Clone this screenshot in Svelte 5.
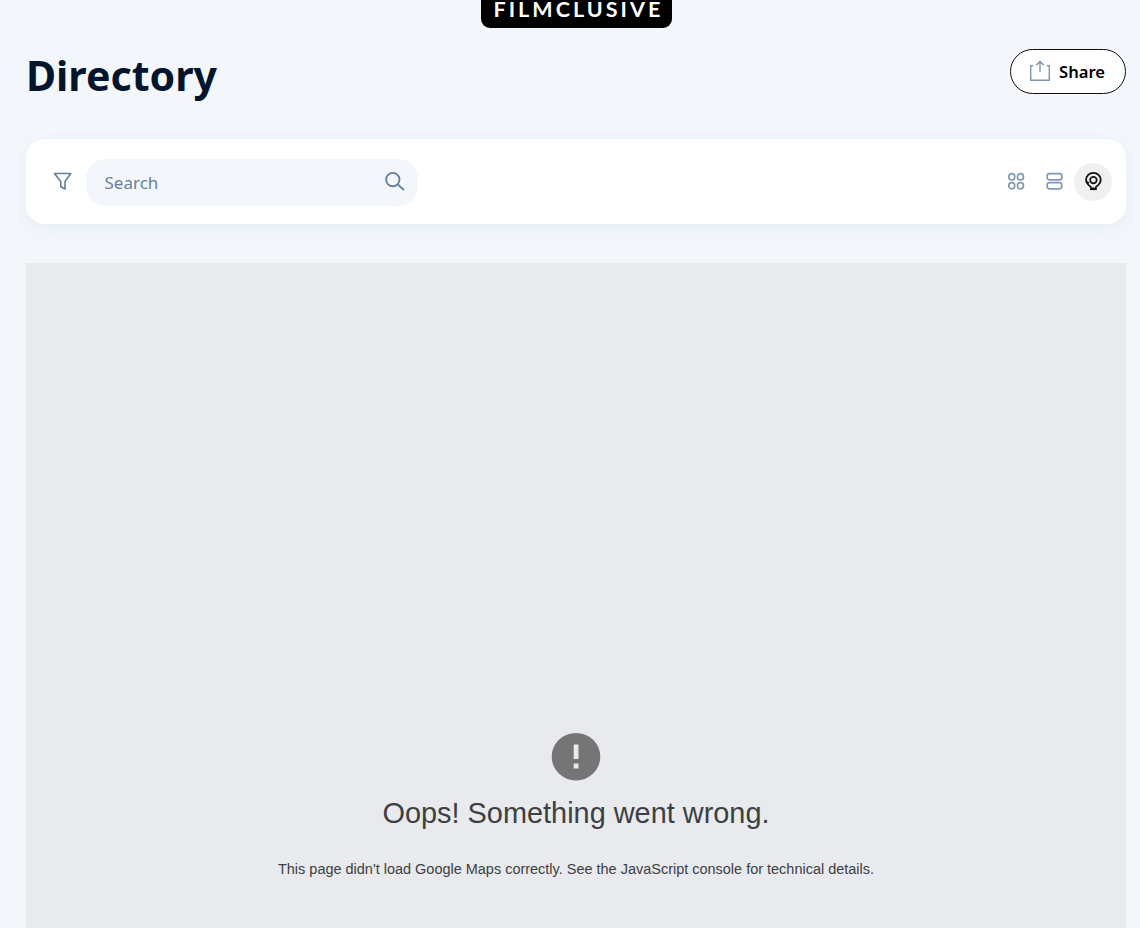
<script>
  let query = $state('');
</script>

<div class="page">
  <div class="brand"><span>FILMCLUSIVE</span></div>

  <header>
    <h1>Directory</h1>
    <button class="share">
      <svg width="22" height="22" viewBox="0 0 22 22" fill="none" stroke="#7f95b0" stroke-width="1.4">
        <path d="M4.2 5.7H1.7V20.2H20.3V5.7H17.8" />
        <path d="M11 12.2V2M7.2 5.2L11 1.4L14.8 5.2" />
      </svg>
      <span>Share</span>
    </button>
  </header>

  <section class="toolbar">
    <button class="icon filter" aria-label="Filter">
      <svg width="20" height="20" viewBox="0 0 20 20" fill="none" stroke="#64809d" stroke-width="1.6" stroke-linejoin="round">
        <path d="M1.4 2.5H17.8L12 10.5V18L7.8 15.8V10.5Z" />
      </svg>
    </button>
    <label class="search">
      <input bind:value={query} placeholder="Search" />
      <svg width="22" height="22" viewBox="0 0 22 22" fill="none" stroke="#64809d" stroke-width="1.9" stroke-linecap="round">
        <circle cx="8.8" cy="8.6" r="6.7" />
        <path d="M13.8 13.4L19.3 18.5" />
      </svg>
    </label>
    <nav>
      <button class="icon" aria-label="Grid">
        <svg width="18" height="18" viewBox="0 0 18 18" fill="none" stroke="#8299b5" stroke-width="1.7">
          <rect x="1.8" y="1.7" width="5.9" height="6.2" rx="2.7" />
          <rect x="10.5" y="1.7" width="5.9" height="6.2" rx="2.7" />
          <rect x="1.8" y="10.6" width="5.9" height="6.2" rx="2.7" />
          <rect x="10.5" y="10.6" width="5.9" height="6.2" rx="2.7" />
        </svg>
      </button>
      <button class="icon" aria-label="List">
        <svg width="18" height="18" viewBox="0 0 18 18" fill="none" stroke="#8299b5" stroke-width="1.7">
          <rect x="1.2" y="1.7" width="14.6" height="6.2" rx="2.2" />
          <rect x="1.2" y="10.6" width="14.6" height="6.2" rx="2.2" />
        </svg>
      </button>
      <button class="icon active" aria-label="Map">
        <svg width="18" height="20" viewBox="0 0 18 20" fill="none" stroke="#111" stroke-width="1.8">
          <path d="M6.8 16.8V15.9C4.2 13.9 2.1 12 2.1 8.9A7.3 7.1 0 0 1 16.7 8.9C16.7 12 14.6 13.9 12 15.9V16.8" />
          <circle cx="9.4" cy="9.1" r="3.3" stroke-width="1.7" />
          <path d="M6 17.8H12.8" stroke-width="2.6" />
          <path d="M2.2 10.8L5.1 12" stroke-width="1.5" />
        </svg>
      </button>
    </nav>
  </section>

  <main>
    <svg width="50" height="50" viewBox="0 0 50 50">
      <ellipse cx="25" cy="24.7" rx="24.3" ry="23.8" fill="#757575" />
      <path d="M22.7 12.5h4.8v14.5h-4.8zM22.7 31.6h4.8v4.8h-4.8z" fill="#e8eaed" />
    </svg>
    <h2>Oops! Something went wrong.</h2>
    <p>This page didn't load Google Maps correctly. See the JavaScript console for technical details.</p>
  </main>
</div>

<style>
  :global(body) { background: #f3f7fc; overflow: hidden; }
  .page {
    box-sizing: border-box;
    height: 928px;
    padding: 0 14px 0 26px;
    display: flex;
    flex-direction: column;
    overflow: hidden;
    font-family: "Noto Sans", sans-serif;
  }
  .brand {
    flex: none;
    align-self: center;
    width: 191px;
    height: 27.5px;
    border-radius: 0 0 9px 9px;
    background: #000;
    color: #fff;
    display: flex;
    justify-content: center;
    font: 700 21.5px/19px Lato, sans-serif;
    letter-spacing: 3.05px;
  }
  .brand span { margin-right: -4.8px; white-space: nowrap; }
  header {
    flex: none;
    height: 46px;
    margin-top: 20.5px;
    display: flex;
    align-items: center;
    justify-content: space-between;
  }
  h1 { margin: 8px 0 0; font-size: 41.1px; line-height: 56px; font-weight: 700; color: #03152d; }
  button { border: 0; padding: 0; background: none; font: inherit; }
  .share {
    box-sizing: border-box;
    width: 116px;
    height: 45px;
    border: 1.5px solid #111;
    border-radius: 23px;
    background: #fff;
    padding-left: 18px;
    display: flex;
    align-items: center;
    gap: 8px;
    font-size: 16.6px;
    font-weight: 600;
    color: #000;
  }
  .toolbar {
    box-sizing: border-box;
    flex: none;
    height: 85px;
    margin-top: 45px;
    padding: 0 14px 0 18px;
    border-radius: 19px;
    background: #fff;
    box-shadow: 0 4px 16px rgba(40, 80, 130, 0.06);
    display: flex;
    align-items: center;
  }
  .icon {
    width: 38px;
    height: 38px;
    border-radius: 50%;
    display: flex;
    align-items: center;
    justify-content: center;
  }
  .icon svg { margin: -1px 0 0 1px; }
  .filter svg { margin-left: 0; }
  .active { background: #f0f0f0; }
  .active svg { margin-left: 0; }
  .search {
    box-sizing: border-box;
    width: 332px;
    height: 47px;
    margin: 2px 0 0 4px;
    padding: 0 12px 0 18.5px;
    border-radius: 19px;
    background: #f3f7fc;
    display: flex;
    align-items: center;
  }
  .search svg { margin-top: -2px; }
  input {
    flex: 1;
    min-width: 0;
    padding: 0;
    border: 0;
    outline: 0;
    background: none;
    font: 17px "Noto Sans", sans-serif;
    color: #03152d;
  }
  input::placeholder { color: #6b819c; opacity: 1; }
  nav { margin-left: auto; display: flex; gap: 1px; }
  main {
    flex: 1;
    margin-top: 39px;
    padding-top: 469px;
    background: #e8eaed;
    display: flex;
    flex-direction: column;
    align-items: center;
    font-family: "Liberation Sans", sans-serif;
    color: #3c4043;
  }
  main svg { flex: none; }
  h2 { margin: 14px 0 0; font-size: 28.9px; line-height: 34px; font-weight: 400; }
  p { margin: 30px 0 0; font-size: 14.47px; line-height: 18px; }
</style>
